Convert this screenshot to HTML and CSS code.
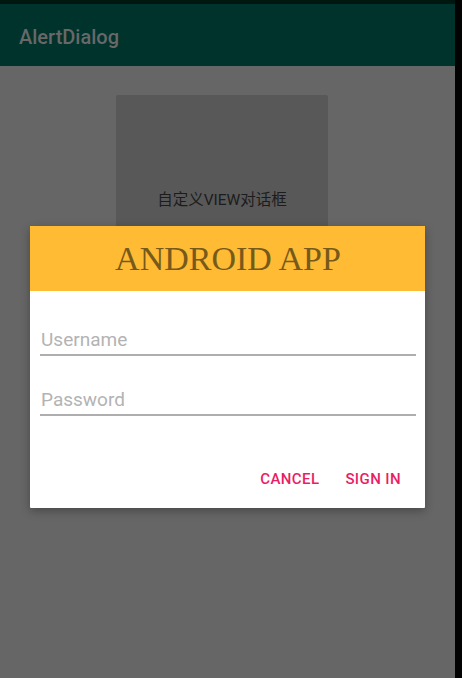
FILE: index.html
```html
<!DOCTYPE html>
<html>
<head>
<meta charset="utf-8">
<link rel="stylesheet" href="styles.css">
</head>
<body>
<div class="screen">
  <div class="phone">
    <div class="statusbar"></div>
    <div class="appbar"><span class="title">AlertDialog</span></div>
    <div class="content">
      <div class="custom-btn">自定义VIEW对话框</div>
    </div>
    <div class="dialog">
      <div class="dialog-head">ANDROID APP</div>
      <div class="dialog-body">
        <div class="field"><span>Username</span></div>
        <div class="field"><span>Password</span></div>
      </div>
      <div class="actions">
        <span class="action">CANCEL</span>
        <span class="action">SIGN IN</span>
      </div>
    </div>
  </div>
  <div class="edge"></div>
</div>
</body>
</html>
```

FILE: styles.css
```css
html, body {
  margin: 0;
  padding: 0;
  background: #000;
}
.screen {
  display: flex;
  width: 462px;
  height: 678px;
  overflow: hidden;
}
.phone {
  position: relative;
  width: 455px;
  height: 678px;
  display: flex;
  flex-direction: column;
  background: #666666;
}
.edge {
  width: 7px;
  background: #030303;
}
.statusbar {
  height: 4px;
  background: #00170f;
}
.appbar {
  height: 62px;
  background: #00332b;
  display: flex;
  align-items: center;
  padding-left: 19px;
}
.title {
  font-family: Roboto, "Liberation Sans", sans-serif;
  font-weight: 500;
  font-size: 20px;
  color: #686868;
  margin-top: 4px;
}
.content {
  flex: 1;
  padding-top: 29px;
  padding-left: 116px;
}
.custom-btn {
  width: 212px;
  height: 206px;
  background: #585858;
  border-radius: 2px;
  display: flex;
  align-items: center;
  justify-content: center;
  font-family: Roboto, "Noto Sans CJK SC", sans-serif;
  font-size: 15.5px;
  color: #1c1c1c;
}
.dialog {
  position: absolute;
  left: 30px;
  top: 226px;
  width: 395px;
  height: 282px;
  background: #fff;
  box-shadow: 0 3px 10px rgba(0,0,0,0.3);
  border-radius: 1px;
  display: flex;
  flex-direction: column;
}
.dialog-head {
  height: 65px;
  background: #ffbb33;
  display: flex;
  align-items: center;
  justify-content: center;
  font-family: "Liberation Serif", serif;
  font-size: 34px;
  color: #765a1b;
  padding-left: 1px;
}
.dialog-body {
  padding: 0 9px 0 10px;
  display: flex;
  flex-direction: column;
}
.field {
  border-bottom: 2px solid #aeaeae;
  font-family: Roboto, "Liberation Sans", sans-serif;
  font-size: 19px;
  color: #b3b3b3;
  height: 26px;
  line-height: 24px;
  padding-left: 1px;
}
.field:first-child {
  margin-top: 37px;
}
.field + .field {
  margin-top: 32px;
}
.actions {
  display: flex;
  justify-content: flex-end;
  gap: 26px;
  padding-right: 24px;
  margin-top: 54px;
}
.action {
  font-family: Roboto, "Liberation Sans", sans-serif;
  font-weight: 500;
  font-size: 15px;
  letter-spacing: 0.4px;
  color: #e91e63;
}
```
